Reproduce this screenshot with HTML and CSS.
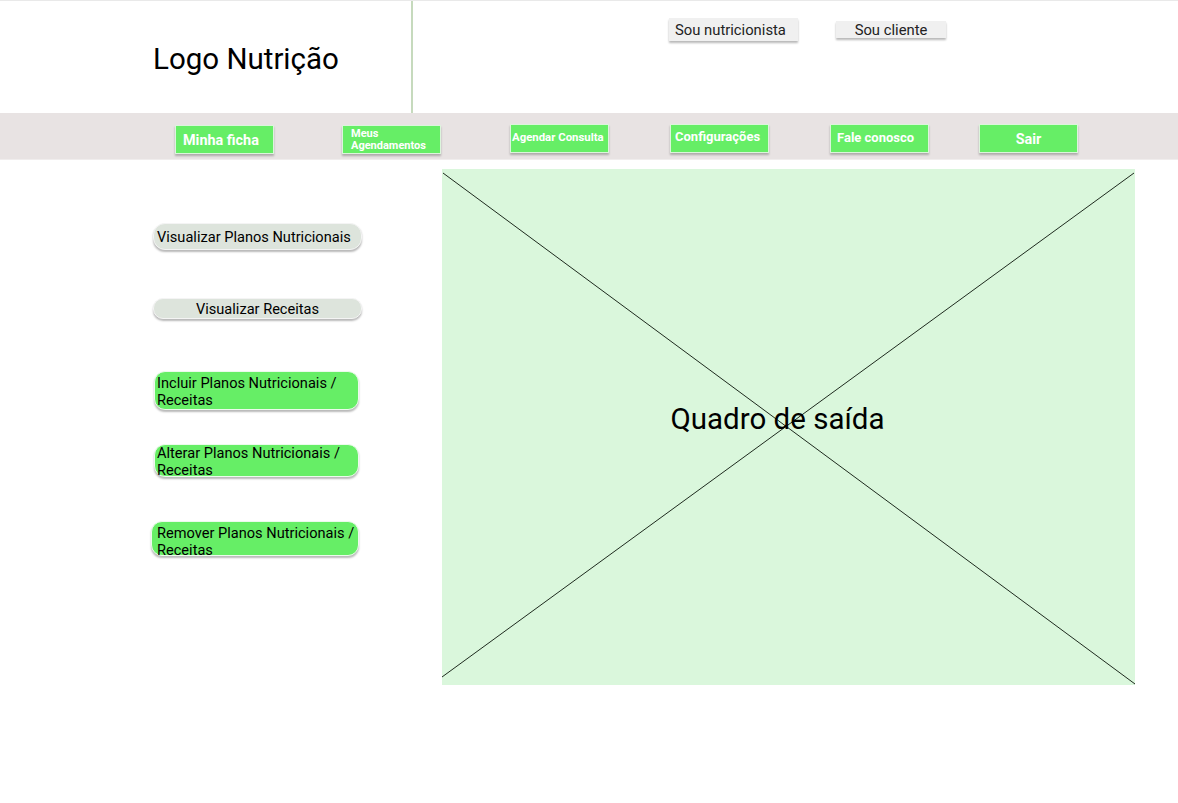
FILE: index.html
```html
<!DOCTYPE html>
<html lang="pt-BR">
<head>
<meta charset="utf-8">
<title>Nutrição</title>
<link rel="stylesheet" href="styles.css">
</head>
<body>
<header class="header">
  <div class="logo-area"><span class="logo">Logo Nutrição</span></div>
  <div class="account">
    <button class="acc-btn acc-nutri">Sou nutricionista</button>
    <button class="acc-btn acc-cliente">Sou cliente</button>
  </div>
</header>
<nav class="nav">
  <button class="nav-btn nb-ficha">Minha ficha</button>
  <button class="nav-btn nb-agend">Meus<br>Agendamentos</button>
  <button class="nav-btn nb-consulta">Agendar Consulta</button>
  <button class="nav-btn nb-config">Configurações</button>
  <button class="nav-btn nb-fale">Fale conosco</button>
  <button class="nav-btn nb-sair">Sair</button>
</nav>
<main class="main">
  <div class="side">
    <button class="pill pill-gray pill-planos">Visualizar Planos Nutricionais</button>
    <button class="pill pill-gray pill-receitas">Visualizar Receitas</button>
    <button class="pill pill-green pill-incluir">Incluir Planos Nutricionais / Receitas</button>
    <button class="pill pill-green pill-alterar">Alterar Planos Nutricionais / Receitas</button>
    <button class="pill pill-green pill-remover">Remover Planos Nutricionais / Receitas</button>
  </div>
  <section class="output">
    <svg class="cross" viewBox="0 0 693 516" preserveAspectRatio="none">
      <line x1="1" y1="4" x2="693" y2="515" stroke="#1e2a1e" stroke-width="1"/>
      <line x1="692" y1="4" x2="0" y2="508" stroke="#1e2a1e" stroke-width="1"/>
    </svg>
    <span class="output-title">Quadro de saída</span>
  </section>
</main>
</body>
</html>
```

FILE: styles.css
```css
* { box-sizing: border-box; }
html, body { margin: 0; padding: 0; background: #ffffff; }
body { font-family: Roboto, "Liberation Sans", Arial, sans-serif; color: #000; width: 1178px; height: 803px; overflow: hidden; }
button { font-family: inherit; cursor: pointer; }

.header { display: flex; height: 113px; border-top: 1px solid #e9e9e9; }
.logo-area { width: 413px; border-right: 2px solid #c6dabd; display: flex; align-items: center; padding-left: 153px; padding-top: 3px; }
.logo { font-size: 29.5px; font-weight: 400; color: #000; }

.account { display: flex; align-items: center; height: 56px; padding-left: 256px; padding-top: 1px; }
.acc-btn { border: none; background: #f0f0f0; color: #222; font-size: 14.8px; padding: 0; box-shadow: 0 2px 2px rgba(0,0,0,0.28); }
.acc-nutri { width: 129px; height: 23px; text-align: left; padding-left: 6px; }
.acc-cliente { width: 110px; height: 17px; margin-left: 38px; line-height: 16px; }

.nav { display: flex; align-items: flex-start; height: 47px; background: #e8e3e3; border-bottom: 1px solid #f0eded; padding-top: 11px; }
.nav-btn { width: 99px; height: 29px; background: #66ee66; border: 1px solid #dcf5dc; color: #fff; font-weight: 700; font-size: 14px; padding: 0; box-shadow: 0 2px 2px rgba(0,0,0,0.25); line-height: 1.1; }
.nb-ficha { margin-left: 175px; margin-top: 1px; font-size: 14.4px; padding-top: 2px; text-align: left; padding-left: 7px; }
.nb-agend { margin-left: 68px; margin-top: 1px; font-size: 11px; text-align: left; padding-left: 8px; line-height: 12px; padding-top: 1px; }
.nb-consulta { margin-left: 69px; font-size: 11.4px; padding-bottom: 2px; text-align: left; padding-left: 1px; }
.nb-config { margin-left: 61px; font-size: 13px; padding-bottom: 2px; text-align: left; padding-left: 4px; }
.nb-fale { margin-left: 61px; font-size: 13px; text-align: left; padding-left: 6px; }
.nb-sair { margin-left: 50px; font-size: 14.4px; padding-top: 2px; }

.main { display: flex; align-items: flex-start; height: 643px; }
.side { width: 442px; display: flex; flex-direction: column; align-items: flex-start; padding-top: 63px; padding-left: 153px; }
.pill { border: 1px solid #f4f4f4; font-size: 14.6px; color: #000; padding: 0; box-shadow: 0 2px 2px rgba(0,0,0,0.28); }
.pill-gray { background: #dde4dc; width: 209px; border-radius: 12px; }
.pill-planos { height: 27px; text-align: left; padding-left: 3px; }
.pill-receitas { height: 21px; margin-top: 48px; border-radius: 10px; }
.pill-green { background: #66ee66; width: 205px; border-radius: 11px; text-align: left; padding: 1px 2px 0 2px; line-height: 17px; border-color: #ecfbec; }
.pill-incluir { height: 39px; margin-top: 52px; margin-left: 1px; padding-top: 2px; }
.pill-alterar { height: 33px; margin-top: 34px; margin-left: 1px; padding-top: 0; }
.pill-remover { height: 35px; margin-top: 44px; margin-left: -2px; width: 208px; padding-left: 5px; padding-top: 3px; }

.output { position: relative; margin-top: 9px; width: 693px; height: 516px; background: #daf7dc; display: flex; align-items: center; justify-content: center; padding-right: 22px; padding-bottom: 16px; }
.cross { position: absolute; left: 0; top: 0; width: 100%; height: 100%; }
.output-title { position: relative; font-size: 29.5px; color: #000; }
```
